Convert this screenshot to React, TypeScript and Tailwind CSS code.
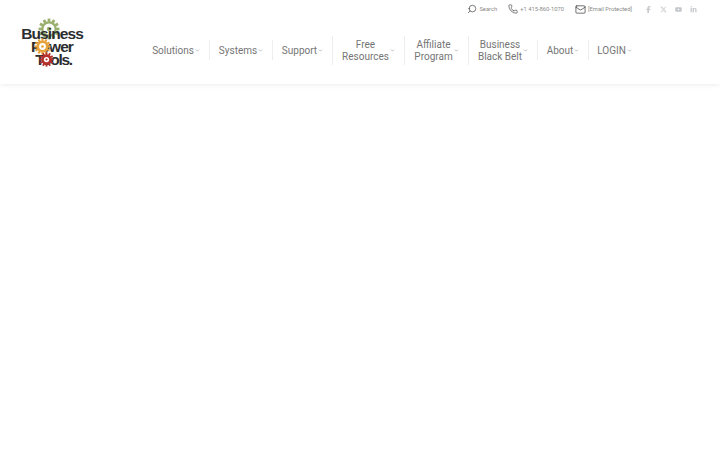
import { ChevronDown, Mail, Phone, Search } from 'lucide-react'
import { FaFacebookF, FaLinkedinIn, FaXTwitter, FaYoutube } from 'react-icons/fa6'

const navItems = [
  { lines: ['Solutions'], width: 'w-[66px]' },
  { lines: ['Systems'], width: 'w-[63px]' },
  { lines: ['Support'], width: 'w-[60px]' },
  { lines: ['Free', 'Resources'], width: 'w-[72px]' },
  { lines: ['Affiliate', 'Program'], width: 'w-[64px]' },
  { lines: ['Business', 'Black Belt'], width: 'w-[69px]' },
  { lines: ['About'], width: 'w-[51px]' },
  { lines: ['LOGIN'], width: 'w-[52px]' },
]

function Gear({ size, color, hole }: { size: number; color: string; hole: number }) {
  const teeth = Array.from({ length: 12 }, (_, i) => i * 30)
  return (
    <svg width={size} height={size} viewBox="0 0 40 40">
      {teeth.map((deg) => (
        <rect key={deg} x="17.5" y="1" width="5" height="7" fill={color} transform={`rotate(${deg} 20 20)`} />
      ))}
      <circle cx="20" cy="20" r="14" fill={color} />
      <circle cx="20" cy="20" r={hole} fill="#fff" />
      <circle cx="20" cy="20" r={hole / 2.5} fill={color} />
    </svg>
  )
}

function Logo() {
  return (
    <div className="relative w-[64px] h-[48px] shrink-0 self-start mt-[1px] -ml-[1px] font-['Liberation_Sans',sans-serif] font-bold text-[#2b2d30] text-[15.5px] leading-[13px] tracking-[-0.9px] text-center">
      <div className="absolute left-[18px] top-[-1px]"><Gear size={22} color="#9bb06f" hole={10} /></div>
      <div className="relative pt-[8px]">
        <div>Business</div>
        <div>Power</div>
        <div className="pl-[3px] tracking-[-1.3px]">Tools.</div>
      </div>
      <div className="absolute left-[14px] top-[19px]"><Gear size={17} color="#e8a23c" hole={8} /></div>
      <div className="absolute left-[19px] top-[33px]"><Gear size={15} color="#b5312c" hole={7} /></div>
    </div>
  )
}

export default function App() {
  return (
    <div className="w-[720px] h-[450px] bg-white overflow-hidden font-['Roboto',sans-serif]">
      <header className="h-[84px] bg-white shadow-[0_0_6px_rgba(0,0,0,0.1)] flex flex-col">
        {/* Top bar */}
        <div className="h-[18px] flex items-center justify-end pr-[23px] text-[5.8px] leading-[10px] text-[#8a8a8a]">
          <div className="flex items-center gap-[2px] mr-[11px]">
            <Search size={10} strokeWidth={1.5} color="#333" className="-scale-x-100" />
            <span>Search</span>
          </div>
          <div className="flex items-center gap-[2px] mr-[11px]">
            <Phone size={10} strokeWidth={1.5} color="#333" />
            <span>+1 415-860-1070</span>
          </div>
          <div className="flex items-center gap-[2px] mr-[13px]">
            <Mail size={11} strokeWidth={1.5} color="#333" />
            <span>[Email Protected]</span>
          </div>
          <div className="flex items-center gap-[8px] text-[#c4c7cc] text-[7px]">
            <FaFacebookF className="w-[7px]" />
            <FaXTwitter className="w-[7px]" />
            <FaYoutube className="w-[7px]" />
            <FaLinkedinIn className="w-[7px]" />
          </div>
        </div>

        {/* Main bar */}
        <div className="flex items-center pl-[21px] h-[64px]">
          <Logo />
          <nav className="flex items-center ml-[59px] text-[10px] leading-[12px] text-[#757575]">
            {navItems.map((item, i) => (
              <div
                key={item.lines[0]}
                className={`${item.width} flex items-center justify-center gap-[1px] ${item.lines.length > 1 ? 'h-[29px]' : 'h-[20px]'} ${i > 0 ? 'border-l border-[#eeeeee]' : ''}`}
              >
                <span className="text-center translate-y-[1px]">
                  {item.lines.map((line) => (
                    <div key={line}>{line}</div>
                  ))}
                </span>
                <ChevronDown size={5} strokeWidth={3} color="#999" />
              </div>
            ))}
          </nav>
        </div>
      </header>
    </div>
  )
}
